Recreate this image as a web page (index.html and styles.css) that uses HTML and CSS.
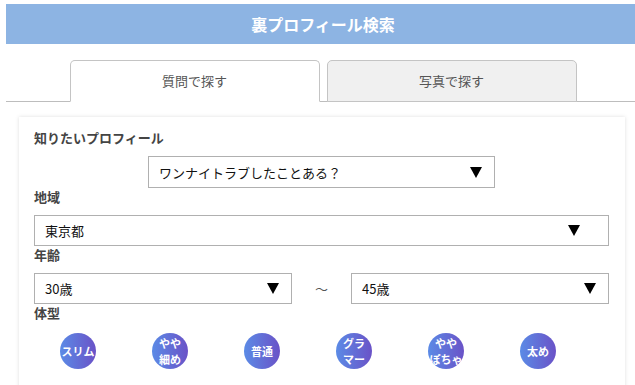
FILE: index.html
```html
<!DOCTYPE html>
<html lang="ja">
<head>
    <meta charset="UTF-8">
    <meta name="viewport" content="width=device-width, initial-scale=1.0">
    <title>裏プロフィール検索</title>
    <link rel="stylesheet" href="styles.css">
</head>
<body>
    <div class="page">
        <h1 class="title">裏プロフィール検索</h1>

        <div class="tabs">
            <div class="tab tab-active">質問で探す</div>
            <div class="tab">写真で探す</div>
        </div>

        <div class="card">
            <div class="field-label">知りたいプロフィール</div>
            <div class="select select-center">
                <span>ワンナイトラブしたことある？</span>
                <span class="arrow"></span>
            </div>

            <div class="field-label">地域</div>
            <div class="select select-wide">
                <span>東京都</span>
                <span class="arrow"></span>
            </div>

            <div class="field-label">年齢</div>
            <div class="age-row">
                <div class="select">
                    <span>30歳</span>
                    <span class="arrow"></span>
                </div>
                <span class="tilde">～</span>
                <div class="select">
                    <span>45歳</span>
                    <span class="arrow"></span>
                </div>
            </div>

            <div class="field-label">体型</div>
            <div class="body-types">
                <div class="type"><span class="circle">スリム</span></div>
                <div class="type"><span class="circle">やや<br>細め</span></div>
                <div class="type"><span class="circle">普通</span></div>
                <div class="type"><span class="circle">グラ<br>マー</span></div>
                <div class="type"><span class="circle">やや<br>ぽちゃ</span></div>
                <div class="type"><span class="circle">太め</span></div>
            </div>
        </div>
    </div>
</body>
</html>
```

FILE: styles.css
```css
html, body {
    overflow: hidden;
}

body {
    margin: 0;
    background-color: #ffffff;
    font-family: "Noto Sans CJK JP", "Noto Sans", sans-serif;
    color: #333;
}

.page {
    width: 634px;
    margin: 4px 0 0 6px;
}

.title {
    margin: 0;
    height: 40px;
    line-height: 40px;
    background-color: #8db4e3;
    color: #ffffff;
    font-size: 16px;
    font-weight: bold;
    text-align: center;
}

.tabs {
    display: flex;
    justify-content: center;
    gap: 7px;
    margin-top: 16px;
    border-bottom: 1px solid #bdbdbd;
}

.tab {
    width: 248px;
    height: 40px;
    line-height: 40px;
    margin-bottom: -1px;
    text-align: center;
    font-size: 13px;
    color: #555;
    background-color: #f0f0f0;
    border: 1px solid #c4c4c4;
    border-radius: 5px 5px 0 0;
}

.tab-active {
    background-color: #ffffff;
    border-bottom-color: #ffffff;
}

.card {
    margin: 15px 15px 0 13px;
    padding: 12px 16px 20px 15px;
    background-color: #ffffff;
    box-shadow: 0 0 4px rgba(0, 0, 0, 0.13);
}

.field-label {
    height: 18px;
    line-height: 18px;
    font-size: 13px;
    font-weight: bold;
    color: #444;
}

.select {
    display: flex;
    align-items: center;
    justify-content: space-between;
    height: 29px;
    margin-top: 9px;
    padding: 0 12px 0 10px;
    border: 1px solid #b0b0b0;
    font-size: 13px;
    color: #111;
    background-color: #ffffff;
}

.select-center {
    width: 323px;
    height: 30px;
    margin: 9px auto 0;
}

.select-wide {
    padding-right: 28px;
}

.arrow {
    width: 0;
    height: 0;
    border-left: 6px solid transparent;
    border-right: 6px solid transparent;
    border-top: 11px solid #000000;
}

.age-row {
    display: grid;
    grid-template-columns: 258px 1fr 258px;
    align-items: center;
    margin-top: 9px;
}

.age-row .select {
    margin-top: 0;
}

.tilde {
    text-align: center;
    font-size: 13px;
    color: #555;
}

.body-types {
    display: grid;
    grid-template-columns: repeat(6, 92px);
    margin: 11px 0 0 -2px;
}

.type {
    display: flex;
    justify-content: center;
}

.circle {
    display: flex;
    align-items: center;
    justify-content: center;
    width: 36px;
    height: 36px;
    border-radius: 50%;
    background: linear-gradient(to right, #5b8be6, #6a52c7);
    color: #ffffff;
    font-size: 11px;
    font-weight: bold;
    line-height: 16px;
    text-align: center;
    white-space: nowrap;
}
```
